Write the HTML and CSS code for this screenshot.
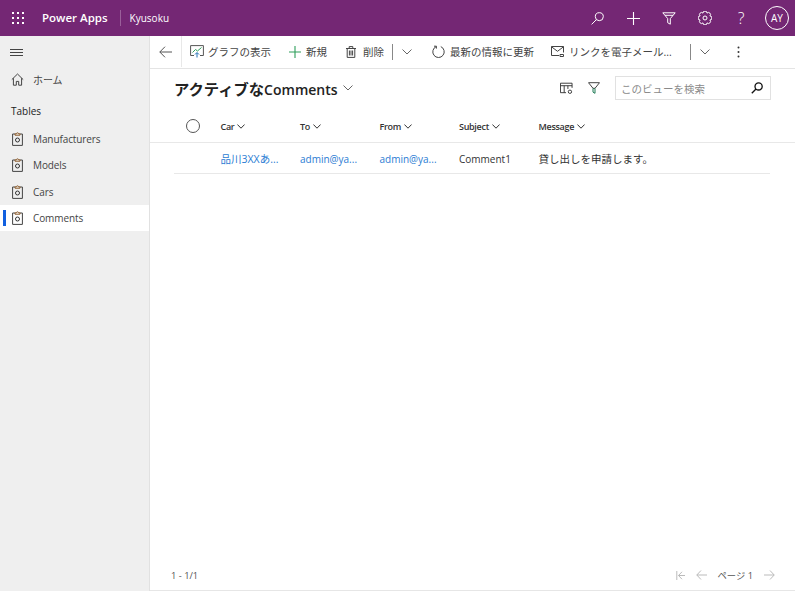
FILE: index.html
```html
<!DOCTYPE html>
<html lang="ja">
<head>
    <meta charset="UTF-8">
    <meta name="viewport" content="width=device-width, initial-scale=1.0">
    <title>Power Apps</title>
    <link rel="stylesheet" href="styles.css">
</head>
<body>
    <header class="topbar">
        <svg class="waffle" width="12" height="12" viewBox="0 0 12 12" fill="#fff">
            <rect x="0" y="0" width="2" height="2"/><rect x="5" y="0" width="2" height="2"/><rect x="10" y="0" width="2" height="2"/>
            <rect x="0" y="5" width="2" height="2"/><rect x="5" y="5" width="2" height="2"/><rect x="10" y="5" width="2" height="2"/>
            <rect x="0" y="10" width="2" height="2"/><rect x="5" y="10" width="2" height="2"/><rect x="10" y="10" width="2" height="2"/>
        </svg>
        <span class="brand">Power Apps</span>
        <span class="app-name">Kyusoku</span>
        <div class="top-actions">
            <span class="top-btn"><svg width="13" height="13" viewBox="0 0 13 13" fill="none" stroke="#fff" stroke-width="1"><circle cx="8.3" cy="4.7" r="4"/><path d="M5.4 7.6L.6 12.4"/></svg></span>
            <span class="top-btn"><svg width="13" height="13" viewBox="0 0 13 13" fill="none" stroke="#fff" stroke-width="1.1"><path d="M6.5 0v13M0 6.5h13"/></svg></span>
            <span class="top-btn"><svg width="14" height="13" viewBox="0 0 14 13" fill="none" stroke="#fff" stroke-width="1"><path d="M.8.8h12.4L8.3 6.6v5.6l-2.6-1.5V6.6z"/><path d="M3 3.3h8"/></svg></span>
            <span class="top-btn"><svg width="14" height="14" viewBox="0 0 14 14" fill="none" stroke="#fff" stroke-width="1"><path d="M11.9 4.97A1.7 1.7 0 0 1 11.9 9.03A1.7 1.7 0 0 1 9.03 11.9A1.7 1.7 0 0 1 4.97 11.9A1.7 1.7 0 0 1 2.1 9.03A1.7 1.7 0 0 1 2.1 4.97A1.7 1.7 0 0 1 4.97 2.1A1.7 1.7 0 0 1 9.03 2.1A1.7 1.7 0 0 1 11.9 4.97z"/><circle cx="7" cy="7" r="2"/></svg></span>
            <span class="top-btn help">?</span>
            <span class="avatar">AY</span>
        </div>
    </header>

    <div class="shell">
        <nav class="sidebar">
            <svg class="hamburger" width="13" height="8" viewBox="0 0 13 8" stroke="#444" stroke-width="1"><path d="M0 .5h13M0 3.5h13M0 6.5h13"/></svg>
            <a class="nav-item home">
                <svg width="13" height="13" viewBox="0 0 13 13" fill="none" stroke="#444" stroke-width="1"><path d="M.8 6.6L6.5 1l5.7 5.6M2.4 5.2v7h2.9V8.4h2.4v3.8h2.9v-7"/></svg>
                <span>ホーム</span>
            </a>
            <div class="nav-group">Tables</div>
            <a class="nav-item">
                <svg class="clip" width="11" height="14" viewBox="0 0 11 14"><use href="#clip-icon"/></svg>
                <span>Manufacturers</span>
            </a>
            <a class="nav-item">
                <svg class="clip" width="11" height="14" viewBox="0 0 11 14"><use href="#clip-icon"/></svg>
                <span>Models</span>
            </a>
            <a class="nav-item">
                <svg class="clip" width="11" height="14" viewBox="0 0 11 14"><use href="#clip-icon"/></svg>
                <span>Cars</span>
            </a>
            <a class="nav-item active">
                <svg class="clip" width="11" height="14" viewBox="0 0 11 14"><use href="#clip-icon"/></svg>
                <span>Comments</span>
            </a>
        </nav>

        <main class="content">
            <div class="commandbar">
                <span class="back">
                    <svg width="13" height="12" viewBox="0 0 13 12" fill="none" stroke="#555" stroke-width="1"><path d="M6 .7L.8 6 6 11.3M.8 6H13"/></svg>
                </span>
                <span class="cmd chart">
                    <svg width="14" height="13" viewBox="0 0 14 13" fill="none"><path d="M4 10.5H.6V.6h12.8v9.9H10" stroke="#555"/><path d="M2.5 7.5l3-3 2 1.5 4-3.5" stroke="#2e9e5b"/><path d="M7 12.5V8M5 9.5l2-2 2 2" stroke="#1f6fb5"/></svg>
                    グラフの表示
                </span>
                <span class="cmd new">
                    <svg width="12" height="12" viewBox="0 0 12 12" stroke="#2e9e5b" stroke-width="1.1"><path d="M6 0v12M0 6h12"/></svg>
                    新規
                </span>
                <span class="cmd delete">
                    <svg width="10" height="12" viewBox="0 0 10 12" fill="none" stroke="#444"><path d="M0 2.5h10M3.2 2.5V.6h3.6v1.9M1.2 2.5v8.9h7.6V2.5M3.4 4.5v5M5 4.5v5M6.6 4.5v5"/></svg>
                    削除
                </span>
                <span class="cmd-sep"></span>
                <svg class="chev" width="10" height="6" viewBox="0 0 10 6" fill="none" stroke="#666"><path d="M.5.5L5 5 9.5.5"/></svg>
                <span class="cmd refresh">
                    <svg width="13" height="13" viewBox="0 0 13 13" fill="none" stroke="#444"><path d="M4.2 1.6A5.7 5.7 0 1 0 8.8 1.6"/><path d="M4.4 3.6V1.2H2"/></svg>
                    最新の情報に更新
                </span>
                <span class="cmd mail">
                    <svg width="13" height="11" viewBox="0 0 13 11" fill="none" stroke="#444"><path d="M8 9.5H.5V.5h12v6M.5.8l6 4.5 6-4.5"/><path d="M9 8.5h3.5v2H9z"/></svg>
                    リンクを電子メール...
                </span>
                <span class="cmd-sep second"></span>
                <svg class="chev" width="10" height="6" viewBox="0 0 10 6" fill="none" stroke="#666"><path d="M.5.5L5 5 9.5.5"/></svg>
                <svg class="more" width="3" height="12" viewBox="0 0 3 12" fill="#333"><circle cx="1.5" cy="1.5" r="1"/><circle cx="1.5" cy="6" r="1"/><circle cx="1.5" cy="10.5" r="1"/></svg>
            </div>

            <div class="view-head">
                <h1>アクティブな<span class="latin">Comments</span></h1>
                <svg class="title-chev" width="10" height="6" viewBox="0 0 10 6" fill="none" stroke="#666"><path d="M.5.5L5 5 9.5.5"/></svg>
                <div class="view-tools">
                    <svg width="13" height="13" viewBox="0 0 14 13" fill="none" stroke="#333"><path d="M.5 11V.8h12.5v5M.5 3.5h12.5M4.5 3.5V11M8.5 3.5V7M.5 11h6"/><circle cx="10.7" cy="10" r="1.8"/></svg>
                    <svg class="view-filter" width="12" height="12" viewBox="0 0 12 12" fill="none"><path d="M.5.7h11L7 6.3H5z" stroke="#444"/><path d="M5 6.3v3.8l2 1.2v-5" stroke="#1f7a55"/></svg>
                    <div class="search">
                        <span>このビューを検索</span>
                        <svg width="12" height="12" viewBox="0 0 12 12" fill="none" stroke="#111" stroke-width="1.3"><circle cx="7.6" cy="4.4" r="3.6"/><path d="M5 7L.8 11.2"/></svg>
                    </div>
                </div>
            </div>

            <div class="grid">
                <div class="grid-row head">
                    <span class="check"></span>
                    <span class="col">Car<svg width="8" height="5" viewBox="0 0 8 5" fill="none" stroke="#333"><path d="M.4.5L4 4.2 7.6.5"/></svg></span>
                    <span class="col">To<svg width="8" height="5" viewBox="0 0 8 5" fill="none" stroke="#333"><path d="M.4.5L4 4.2 7.6.5"/></svg></span>
                    <span class="col">From<svg width="8" height="5" viewBox="0 0 8 5" fill="none" stroke="#333"><path d="M.4.5L4 4.2 7.6.5"/></svg></span>
                    <span class="col">Subject<svg width="8" height="5" viewBox="0 0 8 5" fill="none" stroke="#333"><path d="M.4.5L4 4.2 7.6.5"/></svg></span>
                    <span class="col">Message<svg width="8" height="5" viewBox="0 0 8 5" fill="none" stroke="#333"><path d="M.4.5L4 4.2 7.6.5"/></svg></span>
                </div>
                <div class="data-wrap">
                    <div class="grid-row data">
                        <span class="check-space"></span>
                        <span class="col link cjk">品川3XXあ...</span>
                        <span class="col link">admin@ya...</span>
                        <span class="col link">admin@ya...</span>
                        <span class="col">Comment1</span>
                        <span class="col cjk">貸し出しを申請します。</span>
                    </div>
                </div>
            </div>

            <div class="pager">
                <span>1 - 1/1</span>
                <div class="pager-nav">
                    <svg width="10" height="9" viewBox="0 0 10 9" fill="none" stroke="#bbb"><path d="M.8 0v9M6 .8L2.5 4.5 6 8.2M2.5 4.5H9"/></svg>
                    <svg class="prev" width="11" height="10" viewBox="0 0 11 10" fill="none" stroke="#bbb"><path d="M5 .5L.8 5 5 9.5M.8 5H11"/></svg>
                    <span class="page-no">ページ 1</span>
                    <svg class="next" width="11" height="10" viewBox="0 0 11 10" fill="none" stroke="#bbb"><path d="M6 .5L10.2 5 6 9.5M10.2 5H0"/></svg>
                </div>
            </div>
        </main>
    </div>

    <svg width="0" height="0" class="defs">
        <symbol id="clip-icon" viewBox="0 0 11 14">
            <path d="M3 2H.6v11.4h9.8V2H8" fill="none" stroke="#444"/>
            <path d="M3 3.2V1.8h1.5a1 1 0 0 1 2 0H8v1.4z" fill="none" stroke="#8a5a2b"/>
            <circle cx="5.5" cy="8" r="2" fill="none" stroke="#333"/>
        </symbol>
    </svg>
</body>
</html>
```

FILE: styles.css
```css
* {
    box-sizing: border-box;
}

body {
    margin: 0;
    height: 591px;
    overflow: hidden;
    display: flex;
    flex-direction: column;
    font-family: "Open Sans", "Noto Sans CJK JP", sans-serif;
    font-size: 11px;
    color: #333;
    background: #fff;
}

.defs {
    position: absolute;
}

.topbar {
    display: flex;
    align-items: center;
    height: 36px;
    flex: none;
    background: #742774;
    color: #fff;
    padding-left: 12px;
}

.brand {
    margin-left: 18px;
    font-size: 11.5px;
    font-weight: 600;
    padding-right: 12px;
    border-right: 1px solid #9a5f9a;
    line-height: 16px;
}

.app-name {
    margin-left: 9px;
    font-size: 10px;
}

.top-actions {
    margin-left: auto;
    display: flex;
    align-items: center;
    padding-right: 6px;
}

.top-btn {
    width: 36px;
    display: flex;
    justify-content: center;
    align-items: center;
}

.help {
    font-size: 16px;
    font-weight: 300;
}

.avatar {
    width: 24px;
    height: 24px;
    margin-left: 6px;
    border: 1px solid #fff;
    border-radius: 50%;
    display: flex;
    align-items: center;
    justify-content: center;
    font-size: 10px;
}

.shell {
    flex: 1;
    display: flex;
    min-height: 0;
}

.sidebar {
    width: 150px;
    flex: none;
    background: #efefef;
    border-right: 1px solid #e1e1e1;
    padding-top: 13px;
}

.hamburger {
    display: block;
    margin-left: 10px;
    margin-bottom: 9px;
}

.nav-item {
    position: relative;
    display: flex;
    align-items: center;
    height: 26.4px;
    padding-left: 11px;
    color: #444;
    font-size: 10px;
    letter-spacing: -0.1px;
}

.nav-item svg {
    width: 13px;
    margin-right: 9px;
    flex: none;
}

.nav-group {
    margin: 9px 0 4.4px 11px;
    font-size: 10px;
    line-height: 20px;
    color: #222;
}

.active {
    background: #fff;
}

.active::before {
    content: "";
    position: absolute;
    left: 3px;
    top: 5px;
    width: 3px;
    height: 16px;
    background: #1160e0;
}

.content {
    flex: 1;
    min-width: 0;
    display: flex;
    flex-direction: column;
    border-bottom: 1px solid #e6e6e6;
}

.commandbar {
    display: flex;
    align-items: center;
    height: 33px;
    flex: none;
    border-bottom: 1px solid #e4e4e4;
    padding-bottom: 1px;
    font-size: 10.5px;
    color: #444;
}

.back {
    width: 32px;
    height: 31px;
    display: flex;
    align-items: center;
    justify-content: center;
    border-right: 1px solid #e8e8e8;
}

.cmd {
    display: flex;
    align-items: center;
    gap: 5px;
}

.chart {
    margin-left: 8px;
    gap: 4px;
}

.new {
    margin-left: 18px;
}

.delete {
    margin-left: 19px;
    gap: 7px;
}

.cmd-sep {
    width: 1px;
    height: 16px;
    margin-left: 8px;
    background: #888;
}

.chev {
    margin-left: 9px;
    flex: none;
}

.refresh {
    margin-left: 20px;
}

.mail {
    margin-left: 17px;
}

.cmd-sep.second {
    margin-left: 18px;
}

.more {
    margin-left: 27px;
}

.view-head {
    display: flex;
    align-items: center;
    height: 41px;
    flex: none;
    padding: 0 24px 3px;
}

h1 {
    margin: 0;
    font-size: 15.3px;
    font-weight: 700;
    color: #222;
}

.latin {
    font-size: 14px;
    font-weight: 600;
}

.title-chev {
    margin-left: 5px;
}

.view-tools {
    margin-left: auto;
    display: flex;
    align-items: center;
}

.view-filter {
    margin-left: 15px;
}

.search {
    width: 156px;
    height: 24px;
    margin-left: 15px;
    border: 1px solid #e1e1e1;
    display: flex;
    align-items: center;
    justify-content: space-between;
    padding: 0 7px 0 5px;
    color: #8a8a8a;
    font-size: 10.5px;
}

.grid {
    flex: 1;
}

.grid-row {
    display: flex;
    align-items: center;
}

.head {
    height: 33px;
    border-bottom: 1px solid #e8e8e8;
    padding-left: 36px;
    font-size: 9px;
    font-weight: 600;
    letter-spacing: -0.3px;
}

.check {
    width: 14px;
    height: 14px;
    border: 1px solid #555;
    border-radius: 50%;
    margin-right: 20.5px;
    flex: none;
}

.col {
    width: 79.5px;
    flex: none;
    display: flex;
    align-items: center;
    gap: 3px;
    white-space: nowrap;
}

.data-wrap {
    margin: 0 25px 0 24px;
    border-bottom: 1px solid #e8e8e8;
}

.data {
    height: 30px;
    padding-top: 1px;
    font-size: 10px;
    padding-left: 11.5px;
}

.cjk {
    font-size: 10.5px;
}

.check-space {
    width: 35px;
    flex: none;
}

.link {
    color: #2b7cd3;
}

.pager {
    display: flex;
    align-items: center;
    justify-content: space-between;
    height: 30px;
    flex: none;
    padding: 0 20px 0 21px;
    font-size: 9.3px;
    color: #555;
}

.pager-nav {
    display: flex;
    align-items: center;
}

.prev {
    margin-left: 10px;
}

.page-no {
    margin-left: 11px;
}

.next {
    margin-left: 11px;
}
```
